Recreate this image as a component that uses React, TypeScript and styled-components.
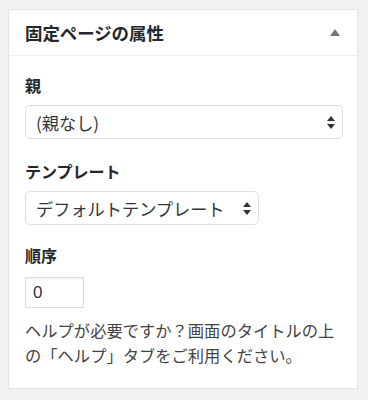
import React from 'react';
import styled, { createGlobalStyle } from 'styled-components';

const GlobalStyle = createGlobalStyle`
    body {
        margin: 0;
        background: #f1f1f1;
        font-family: "Noto Sans CJK JP", "Noto Sans", sans-serif;
        color: #444;
    }
`;

const Page = styled.div`
    padding: 9px 0 0 8px;
`;

const Box = styled.div`
    width: 350px;
    height: 380px;
    box-sizing: border-box;
    background: #fff;
    border: 1px solid #e5e5e5;
    box-shadow: 0 1px 1px rgba(0, 0, 0, 0.04);
`;

const Header = styled.div`
    height: 45px;
    display: flex;
    align-items: center;
    justify-content: space-between;
    padding: 0 16px 0 16px;
    border-bottom: 1px solid #eee;
`;

const Title = styled.h2`
    margin: 0;
    font-size: 17.4px;
    font-weight: bold;
    color: #23282d;
`;

const Toggle = styled.span`
    width: 0;
    height: 0;
    border-left: 5px solid transparent;
    border-right: 5px solid transparent;
    border-bottom: 7px solid #72777c;
    margin-right: 1px;
`;

const Body = styled.div`
    padding: 19px 15px 0 16px;
`;

const Label = styled.p<{ $gap?: number; $below?: number }>`
    margin: ${props => props.$gap ?? 0}px 0 ${props => props.$below ?? 10}px 0;
    font-size: 16px;
    line-height: 20px;
    font-weight: bold;
    color: #23282d;
`;

const SelectWrap = styled.div<{ $width: number }>`
    position: relative;
    width: ${props => props.$width}px;
    height: 34px;
`;

const Select = styled.select`
    appearance: none;
    width: 100%;
    height: 100%;
    box-sizing: border-box;
    border: 1px solid #ddd;
    border-radius: 5px;
    background: #fff;
    padding: 0 28px 0 10px;
    font-family: inherit;
    font-size: 17.2px;
    color: #32373c;
`;

const Arrows = styled.svg`
    position: absolute;
    right: 8px;
    top: 11px;
    pointer-events: none;
`;

const NumberInput = styled.input`
    display: block;
    width: 59px;
    height: 31px;
    box-sizing: border-box;
    border: 1px solid #ddd;
    box-shadow: inset 0 1px 2px rgba(0, 0, 0, 0.07);
    padding: 0 7px;
    font-family: "Liberation Sans", sans-serif;
    font-size: 17px;
    color: #32373c;
`;

const Help = styled.p`
    margin: 10px 0 0 0;
    font-size: 16.3px;
    line-height: 25px;
    color: #444;
`;

function SelectField({ width, value }: { width: number; value: string }) {
    return (
        <SelectWrap $width={width}>
            <Select defaultValue={value}>
                <option>{value}</option>
            </Select>
            <Arrows width="8" height="13" viewBox="0 0 8 13">
                <path d="M4 0 L8 5 L0 5 Z" fill="#333" />
                <path d="M0 8 L8 8 L4 13 Z" fill="#333" />
            </Arrows>
        </SelectWrap>
    );
}

export default function App(): JSX.Element {
    return (
        <Page>
            <GlobalStyle />
            <Box>
                <Header>
                    <Title>固定ページの属性</Title>
                    <Toggle />
                </Header>
                <Body>
                    <Label>親</Label>
                    <SelectField width={318} value="(親なし)" />
                    <Label $gap={22}>テンプレート</Label>
                    <SelectField width={234} value="デフォルトテンプレート" />
                    <Label $gap={20} $below={12}>順序</Label>
                    <NumberInput defaultValue="0" />
                    <Help>ヘルプが必要ですか？画面のタイトルの上の「ヘルプ」タブをご利用ください。</Help>
                </Body>
            </Box>
        </Page>
    );
}
